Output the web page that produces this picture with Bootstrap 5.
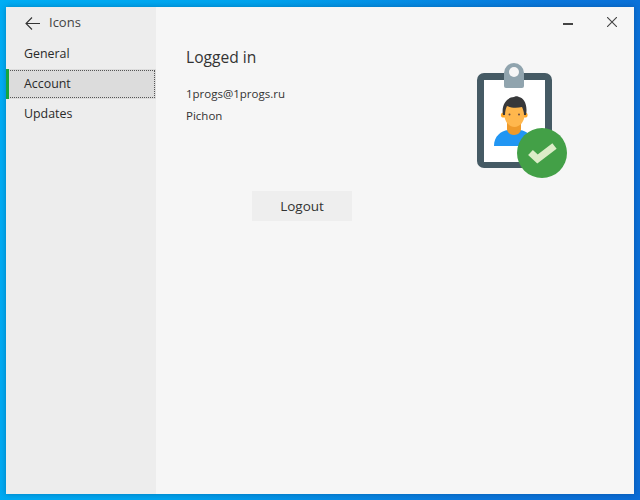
<!DOCTYPE html>
<html lang="en">
<head>
<meta charset="utf-8">
<title>Icons</title>
<link href="https://cdn.jsdelivr.net/npm/bootstrap@5.3.0/dist/css/bootstrap.min.css" rel="stylesheet">
<style>
html,body{height:100%}
body{width:640px;height:500px;overflow:hidden;padding:7px 6px 6px;background:linear-gradient(100deg,#00aef5 0%,#00a4ee 35%,#0a78dc 75%,#0a6cd6 100%);font-family:"Open Sans","Noto Sans",sans-serif;color:#1a1a1a;font-size:13px}
.app-window{height:487px;background:#f6f6f6;box-shadow:0 0 6px rgba(0,40,90,.35)}
.side-pane{width:150px;background:#ededed;flex:none}
.back-row{height:32px;padding-left:19px;gap:9px;font-size:13px;color:#444}
.side-item{height:30px;padding-left:18px;font-size:12.4px;color:#2a2a2a}
.side-item.sel{background:#dcdcdc;position:relative;outline:1px dotted #555;outline-offset:-2px}
.side-item.sel::before{content:"";position:absolute;left:0;top:0;bottom:0;width:3px;background:#17a53c}
.main-pane{min-width:0}
.caption-row{height:30px;padding-right:17px;gap:34px}
.page-body{padding-left:30px;padding-right:54px;margin-top:3px}
.page-title{font-size:15.6px;font-weight:400;margin:6px 0 15px;line-height:22px;color:#333}
.info-line{font-size:11.5px;line-height:22px;color:#333}
.logout-btn{width:100px;height:30px;background:#eeeeee;border:0;font-size:13.5px;color:#333;margin:64px 0 0 66px;padding:0;border-radius:0}
.badge-art{margin-top:15px;flex:none}
</style>
</head>
<body>
<div class="app-window d-flex">
  <nav class="side-pane d-flex flex-column">
    <div class="back-row d-flex align-items-center">
      <svg width="15" height="13" viewBox="0 0 15 13" fill="none" stroke="#333" stroke-width="1.1"><path d="M15 6.500H1M7 .5 1 6.500l6 6"/></svg>
      <span>Icons</span>
    </div>
    <div class="side-item d-flex align-items-center">General</div>
    <div class="side-item sel d-flex align-items-center">Account</div>
    <div class="side-item d-flex align-items-center">Updates</div>
  </nav>
  <main class="main-pane flex-grow-1 d-flex flex-column">
    <div class="caption-row d-flex justify-content-end align-items-center">
      <svg width="10" height="10" viewBox="0 0 10 10"><path d="M0 7h10" stroke="#444" stroke-width="2"/></svg>
      <svg width="10" height="10" viewBox="0 0 10 10" fill="none" stroke="#444" stroke-width="1.1"><path d="M0 0l10 10M10 0 0 10"/></svg>
    </div>
    <div class="page-body d-flex justify-content-between">
      <div class="d-flex flex-column">
        <h1 class="page-title">Logged in</h1>
        <div class="info-line">1progs@1progs.ru</div>
        <div class="info-line">Pichon</div>
        <button type="button" class="btn logout-btn">Logout</button>
      </div>
      <svg class="badge-art" width="120" height="130" viewBox="0 0 120 130">
        <rect x="17" y="18" width="75" height="95" rx="7" fill="#455a64"/>
        <rect x="24" y="25" width="61" height="82" fill="#fff"/>
        <path d="M44 31V18a10 10 0 0 1 20 0v13a2 2 0 0 1-2 2H46a2 2 0 0 1-2-2z" fill="#90a4ae"/>
        <circle cx="54" cy="17" r="5" fill="#f6f6f6"/>
        <path d="M34 91c0-10 7-15 14-16l6 2 6-2c7 1 13 6 13 16z" fill="#2196f3"/>
        <path d="M47 66h14v8c0 3-3 6-7 6s-7-3-7-6z" fill="#ef9a2a"/>
        <circle cx="43.500" cy="60" r="2.600" fill="#ffa726"/>
        <circle cx="65" cy="60" r="2.600" fill="#ffa726"/>
        <path d="M44.500 54c0-8 20-8 20 0v6c0 7-5 12-10 12s-10-5-10-12z" fill="#ffb74d"/>
        <path d="M43 60c-2-10 4-18 11-18 1-1 4-1 5 0 5 1 9 8 7 18h-2c0-3-1-6-2-8-5 1-11 1-15-1-1 2-2 5-2 9z" fill="#37383a"/>
        <circle cx="49.500" cy="59.500" r="1" fill="#6d4c41"/>
        <circle cx="59" cy="59.500" r="1" fill="#6d4c41"/>
        <circle cx="82" cy="98" r="25" fill="#43a047"/>
        <path d="M70.500 97.500l7 6.500 17-13" fill="none" stroke="#dcedc8" stroke-width="7"/>
      </svg>
    </div>
  </main>
</div>
<script src="https://cdn.jsdelivr.net/npm/bootstrap@5.3.0/dist/js/bootstrap.bundle.min.js"></script>
</body>
</html>
